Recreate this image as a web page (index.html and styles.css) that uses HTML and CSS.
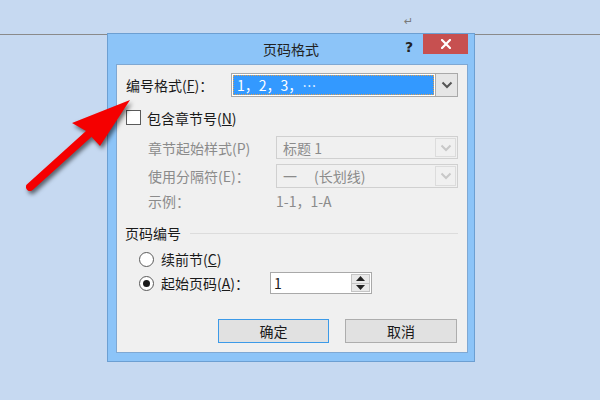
FILE: index.html
```html
<!DOCTYPE html>
<html lang="zh-CN">
<head>
<meta charset="utf-8">
<title>页码格式</title>
<link rel="stylesheet" href="styles.css">
</head>
<body>
<div class="hline"></div>
<div class="para">↵</div>

<div class="dialog">
  <div class="titlebar">
    <div class="title">页码格式</div>
    <div class="help">?</div>
    <div class="close">
      <svg width="10" height="10" viewBox="0 0 10 10"><path d="M1 1 L9 9 M9 1 L1 9" stroke="#fff" stroke-width="2.2" stroke-linecap="square"/></svg>
    </div>
  </div>
  <div class="content">
    <div class="row r1">
      <div class="lab1">编号格式(<u>F</u>)：</div>
      <div class="combo active">
        <div class="field"><span>1，2，3，…</span></div>
        <div class="dd"><svg width="12" height="8" viewBox="0 0 12 8"><path d="M1.5 1.5 L6 6 L10.5 1.5" fill="none" stroke="#555" stroke-width="2"/></svg></div>
      </div>
    </div>

    <div class="row r2">
      <div class="check"></div>
      <div class="ctext">包含章节号(<u>N</u>)</div>
    </div>

    <div class="row r3 dis">
      <div class="lab2">章节起始样式(P)</div>
      <div class="combo disabled">
        <div class="dfield">标题 1</div>
        <div class="dd dd-dis"><svg width="12" height="8" viewBox="0 0 12 8"><path d="M1.5 1.5 L6 6 L10.5 1.5" fill="none" stroke="#c8c8c8" stroke-width="2"/></svg></div>
      </div>
    </div>

    <div class="row r4 dis">
      <div class="lab2">使用分隔符(E)：</div>
      <div class="combo disabled tall">
        <div class="dfield">一<span class="sp"></span>(长划线)</div>
        <div class="dd dd-dis"><svg width="12" height="8" viewBox="0 0 12 8"><path d="M1.5 1.5 L6 6 L10.5 1.5" fill="none" stroke="#c8c8c8" stroke-width="2"/></svg></div>
      </div>
    </div>

    <div class="row r5 dis">
      <div class="lab2">示例：</div>
      <div class="val">1-1，1-A</div>
    </div>

    <div class="row group">
      <div class="gtext">页码编号</div>
      <div class="gline"></div>
    </div>

    <div class="row r6">
      <div class="radio"></div>
      <div class="rtext">续前节(<u>C</u>)</div>
    </div>

    <div class="row r7">
      <div class="radio on"><div class="dot"></div></div>
      <div class="rtext lab3">起始页码(<u>A</u>)：</div>
      <div class="spin">
        <div class="sval">1</div>
        <div class="sbtns">
          <div class="sb"><svg width="9" height="5" viewBox="0 0 9 5"><path d="M0 5 L4.5 0 L9 5 Z" fill="#222"/></svg></div>
          <div class="sb"><svg width="9" height="5" viewBox="0 0 9 5"><path d="M0 0 L4.5 5 L9 0 Z" fill="#222"/></svg></div>
        </div>
      </div>
    </div>

    <div class="row btns">
      <div class="btn ok">确定</div>
      <div class="btn">取消</div>
    </div>
  </div>
</div>

<svg class="arrow" width="600" height="400" viewBox="0 0 600 400">
  <g class="arrowg">
    <line x1="30" y1="187" x2="92" y2="131" stroke="#f50000" stroke-width="8" stroke-linecap="round"/>
    <polygon points="130,100 72,123 86,131 100,146" fill="#f50000"/>
  </g>
</svg>
</body>
</html>
```

FILE: styles.css
```css
* { box-sizing: border-box; }

body {
  margin: 0;
  width: 600px;
  height: 400px;
  background: #c6d9f1;
  position: relative;
  overflow: hidden;
  font-family: "Noto Sans CJK SC", "Noto Sans", sans-serif;
  font-size: 14px;
  line-height: 20px;
  color: #1a1a1a;
}

.hline {
  position: absolute;
  left: 0;
  top: 34px;
  width: 600px;
  height: 1px;
  background: #8a8a8a;
}

.para {
  position: absolute;
  left: 404px;
  top: 15px;
  font-size: 11px;
  line-height: 14px;
  color: #7a7a7a;
  font-family: "DejaVu Sans", sans-serif;
}

.dialog {
  position: absolute;
  left: 107px;
  top: 33px;
  width: 368px;
  height: 329px;
  background: #8cc4f8;
  border: 1px solid #6c9fd2;
  display: flex;
  flex-direction: column;
  padding: 0 6px 8px 8px;
}

.titlebar {
  height: 30px;
  position: relative;
  margin: 0 -6px 0 -8px;
}

.title {
  text-align: center;
  line-height: 30px;
  font-size: 14px;
  color: #222;
}

.help {
  position: absolute;
  left: 297px;
  top: 4px;
  font-family: "DejaVu Sans", sans-serif;
  font-weight: bold;
  font-size: 14px;
  line-height: 18px;
  color: #222;
}

.close {
  position: absolute;
  left: 315px;
  top: 0;
  width: 45px;
  height: 20px;
  background: #c75050;
  display: flex;
  align-items: center;
  justify-content: center;
}

.content {
  flex: 1;
  background: #f0f0f0;
  border: 1px solid #7fa8d3;
  display: flex;
  flex-direction: column;
}

.row {
  display: flex;
  align-items: center;
  flex-shrink: 0;
}

u { text-decoration: underline; text-underline-offset: 1px; }

.r1 { margin-top: 8px; height: 24px; padding-left: 9px; }
.lab1 { width: 105px; white-space: nowrap; }

.combo {
  display: flex;
  border: 1px solid #a9a9a9;
  background: #fff;
}

.combo.active {
  width: 227px;
  height: 24px;
  padding: 1px 0 1px 1px;
}

.field {
  flex: 1;
  background: #3399ff;
  outline: 1px dotted #e0a050;
  outline-offset: -1px;
  color: #fff;
  padding-left: 4px;
  display: flex;
  align-items: center;
  font-size: 14px;
  line-height: 20px;
  margin-right: 1px;
}

.dd {
  width: 22px;
  margin: -1px 0;
  background: #e6e6e6;
  border-left: 1px solid #acacac;
  display: flex;
  align-items: center;
  justify-content: center;
}

.r2 { margin-top: 13px; height: 15px; padding-left: 9px; }
.check {
  width: 15px;
  height: 15px;
  background: #fff;
  border: 1px solid #5a5a5a;
}
.ctext { margin-left: 6px; }

.dis { color: #8b8b8b; }

.r3 { margin-top: 11px; height: 23px; padding-left: 31px; }
.r4 { margin-top: 5px; height: 24px; padding-left: 31px; }
.lab2 { width: 128px; white-space: nowrap; }

.combo.disabled {
  width: 182px;
  height: 23px;
  background: #f0f0f0;
  border-color: #d0d0d0;
}
.combo.tall { height: 24px; }

.dfield {
  flex: 1;
  padding-left: 6px;
  display: flex;
  align-items: center;
  white-space: nowrap;
}
.sp { display: inline-block; width: 17px; }

.dd-dis {
  margin: 1px 1px 1px 0;
  width: 21px;
  background: #f0f0f0;
  border: 1px solid #dcdcdc;
}

.r5 { margin-top: 3px; height: 20px; padding-left: 31px; }

.group { margin-top: 12px; height: 20px; padding-left: 8px; padding-right: 9px; }
.gline { flex: 1; height: 1px; background: #dcdcdc; margin-left: 9px; }

.r6 { margin-top: 6px; height: 20px; padding-left: 22px; }
.r7 { margin-top: 3px; height: 22px; padding-left: 22px; }

.radio {
  width: 15px;
  height: 15px;
  border-radius: 50%;
  border: 1px solid #5a5a5a;
  background: #fff;
  display: flex;
  align-items: center;
  justify-content: center;
}
.dot { width: 7px; height: 7px; border-radius: 50%; background: #1a1a1a; }
.rtext { margin-left: 7px; white-space: nowrap; }
.lab3 { width: 109px; }

.spin {
  width: 102px;
  height: 22px;
  border: 1px solid #a9a9a9;
  background: #fff;
  display: flex;
}
.sval { flex: 1; padding-left: 3px; line-height: 20px; }
.sbtns {
  width: 20px;
  display: flex;
  flex-direction: column;
  padding: 1px 1px 1px 0;
  gap: 0;
}
.sb {
  flex: 1;
  background: #e9e9e9;
  border: 1px solid #c4c4c4;
  display: flex;
  align-items: center;
  justify-content: center;
}
.sb + .sb { border-top: none; }

.btns { margin-top: 25px; height: 24px; padding-left: 101px; gap: 16px; }
.btn {
  width: 112px;
  height: 24px;
  background: #e1e1e1;
  border: 1px solid #adadad;
  text-align: center;
  line-height: 22px;
  color: #1a1a1a;
}
.btn.ok { width: 111px; border-color: #3c9ae8; }

.arrow {
  position: absolute;
  left: 0;
  top: 0;
  pointer-events: none;
}
.arrowg { filter: drop-shadow(2px 3px 2px rgba(0, 0, 0, 0.55)); }
```
